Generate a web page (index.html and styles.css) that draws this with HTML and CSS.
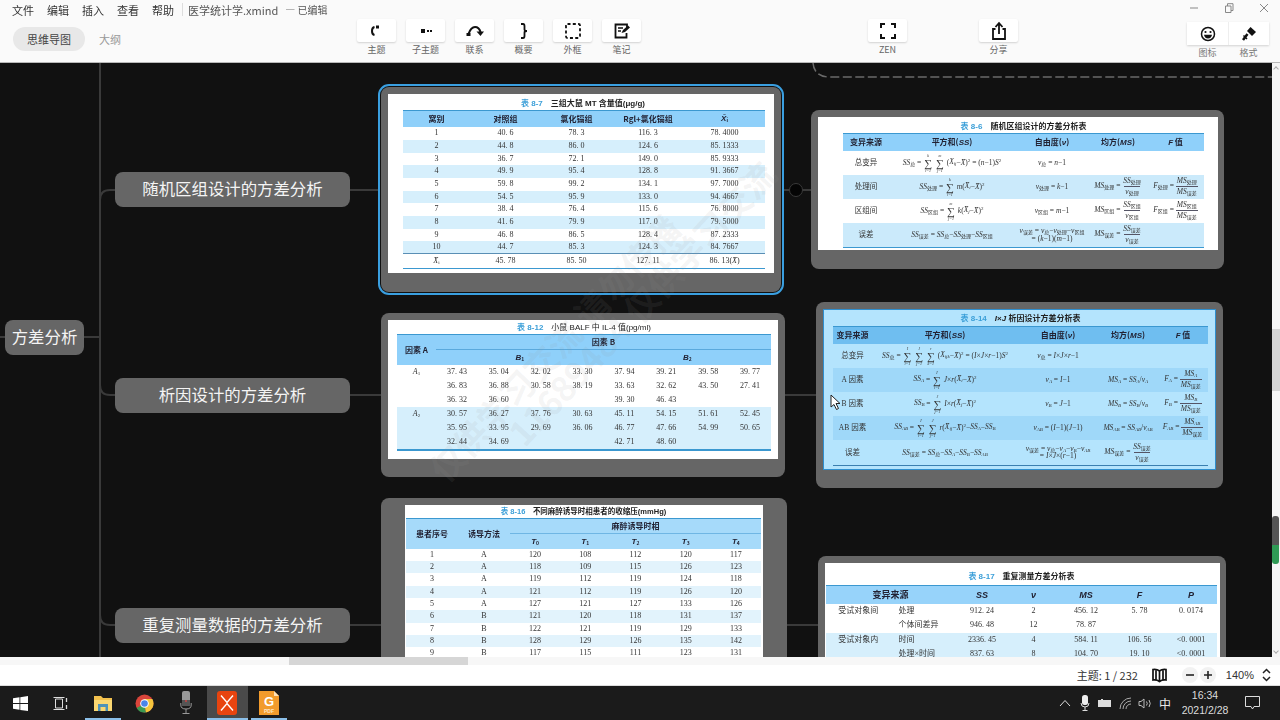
FILE: index.html
```html
<!DOCTYPE html>
<html lang="zh-CN">
<head>
<meta charset="utf-8">
<title>医学统计学.xmind</title>
<link rel="stylesheet" href="styles.css">
</head>
<body>
<header class="top">
  <div class="left">
    <nav class="menu"><span>文件</span><span>编辑</span><span>插入</span><span>查看</span><span>帮助</span><i class="vsep"></i><span class="doc">医学统计学.xmind</span><span class="doc2">— 已编辑</span></nav>
    <div class="tabs"><span class="pill">思维导图</span><span class="tab2">大纲</span></div>
  </div>
  <div class="tools">
    <div class="tool"><div class="btn"><svg width="16" height="16" viewBox="0 0 16 16"><path d="M5.500 4Q3 4.500 3 8T5.500 12" fill="none" stroke="#111" stroke-width="2"/><rect x="7" y="2.500" width="3" height="3" fill="#111"/></svg></div><label>主题</label></div>
    <div class="tool"><div class="btn"><svg width="16" height="16" viewBox="0 0 16 16"><rect x="3" y="6" width="4" height="4" fill="#111"/><rect x="9" y="7" width="2" height="2" fill="#111"/><rect x="12" y="7" width="2" height="2" fill="#111"/></svg></div><label>子主题</label></div>
    <div class="tool"><div class="btn"><svg width="20" height="16" viewBox="0 0 20 16"><path d="M3.500 11Q6 4 10 4T15.500 9" fill="none" stroke="#111" stroke-width="2.200"/><path d="M11.500 8.500H19L15.500 13Z" fill="#111"/><rect x="1.500" y="10" width="4" height="3" fill="#111"/></svg></div><label>联系</label></div>
    <div class="tool"><div class="btn"><svg width="16" height="18" viewBox="0 0 16 18"><path d="M5 2H7Q8.500 2 8.500 4V7.500Q8.500 9 11 9Q8.500 9 8.500 10.500V14Q8.500 16 7 16H5" fill="none" stroke="#111" stroke-width="1.800"/></svg></div><label>概要</label></div>
    <div class="tool"><div class="btn"><svg width="18" height="18" viewBox="0 0 18 18"><rect x="2" y="2" width="14" height="14" rx="1.500" fill="none" stroke="#111" stroke-width="1.800" stroke-dasharray="3 2.300"/></svg></div><label>外框</label></div>
    <div class="tool"><div class="btn"><svg width="18" height="18" viewBox="0 0 18 18"><path d="M14 6V2.500H2.500V15.500H13.500V11" fill="none" stroke="#111" stroke-width="1.800"/><path d="M5 6H10M5 9H8" stroke="#111" stroke-width="1.500"/><path d="M8.500 11L10 8L15 3.500L17 5.500L12 10Z" fill="#111"/></svg></div><label>笔记</label></div>
  </div>
  <div class="tool zen"><div class="btn wide"><svg width="18" height="18" viewBox="0 0 18 18"><path d="M2 6V2H6M12 2H16V6M16 12V16H12M6 16H2V12" fill="none" stroke="#111" stroke-width="2"/></svg></div><label>ZEN</label></div>
  <div class="tool share"><div class="btn wide"><svg width="18" height="20" viewBox="0 0 18 20"><path d="M5.500 8H3V18H15V8H12.500" fill="none" stroke="#111" stroke-width="1.800"/><path d="M9 13V3M5.500 6L9 2L12.500 6" fill="none" stroke="#111" stroke-width="1.800"/></svg></div><label>分享</label></div>
  <div class="right">
    <div class="win">
      <svg width="10" height="10" viewBox="0 0 10 10"><path d="M1 5H9" stroke="#888"/></svg>
      <svg width="10" height="10" viewBox="0 0 10 10"><path d="M1.500 3H7V9.500H1.500ZM3.500 3V.7H9V7.500H7" fill="none" stroke="#888"/></svg>
      <svg width="10" height="10" viewBox="0 0 10 10"><path d="M1 1L9 9M9 1L1 9" stroke="#888"/></svg>
    </div>
    <div class="rbtns">
      <div class="rb"><svg width="16" height="16" viewBox="0 0 16 16"><circle cx="8" cy="8" r="6.500" fill="none" stroke="#111" stroke-width="1.500"/><circle cx="5.500" cy="6" r="1.100" fill="#111"/><circle cx="10.500" cy="6" r="1.100" fill="#111"/><path d="M4 8.800H12Q11.500 12.500 8 12.500T4 8.800Z" fill="#111"/></svg></div>
      <div class="rb"><svg width="16" height="16" viewBox="0 0 16 16"><path d="M9.500 1L15 6L11 10L6 5Z" fill="#111"/><path d="M6.500 8L2 14" stroke="#111" stroke-width="2.500"/><path d="M2.500 9.500L6 13" stroke="#111" stroke-width="1.500"/></svg></div>
    </div>
    <div class="rlabels"><span>图标</span><span>格式</span></div>
  </div>
</header>

<main class="main">
  <section class="canvas">
    <svg class="links" width="1272" height="594" viewBox="0 63 1272 594">
      <g fill="none" stroke="#3a3a3a" stroke-width="2">
        <path d="M0 337H5M84 337H100M100 63V657"/>
        <path d="M100 200Q100 190 110 190H115M100 385Q100 395 110 395H115M100 615Q100 625 110 625H115"/>
        <path d="M350 190H378M350 395H381M350 625H381M784 190H811M785 395H816M787 625H818"/>
      </g>
      <path d="M813 63Q814 76 828 77H1272" fill="none" stroke="#6a6a6a" stroke-width="1.500" stroke-dasharray="9 3.500"/>
      <circle cx="796" cy="190" r="6.500" fill="#050505" stroke="#3a3a3a"/>
    </svg>

    <div class="node root">方差分析</div>
    <div class="node sub s1">随机区组设计的方差分析</div>
    <div class="node sub s2">析因设计的方差分析</div>
    <div class="node sub s3">重复测量数据的方差分析</div>

    <article class="card c1">
      <div class="img i1">
        <div class="ttl"><b>表 8-7</b>　<strong>三组大鼠 MT 含量值(μg/g)</strong></div>
        <table class="t t1">
          <thead><tr><th>窝别</th><th>对照组</th><th>氯化镉组</th><th>Rgl+氯化镉组</th><th><i>X̄</i><sub>i</sub></th></tr></thead>
          <tbody>
            <tr><td>1</td><td>40. 6</td><td>78. 3</td><td>116. 3</td><td>78. 4000</td></tr>
            <tr><td>2</td><td>44. 8</td><td>86. 0</td><td>124. 6</td><td>85. 1333</td></tr>
            <tr><td>3</td><td>36. 7</td><td>72. 1</td><td>149. 0</td><td>85. 9333</td></tr>
            <tr><td>4</td><td>49. 9</td><td>95. 4</td><td>128. 8</td><td>91. 3667</td></tr>
            <tr><td>5</td><td>59. 8</td><td>99. 2</td><td>134. 1</td><td>97. 7000</td></tr>
            <tr><td>6</td><td>54. 5</td><td>95. 9</td><td>133. 0</td><td>94. 4667</td></tr>
            <tr><td>7</td><td>38. 4</td><td>76. 4</td><td>115. 6</td><td>76. 8000</td></tr>
            <tr><td>8</td><td>41. 6</td><td>79. 9</td><td>117. 0</td><td>79. 5000</td></tr>
            <tr><td>9</td><td>46. 8</td><td>86. 5</td><td>128. 4</td><td>87. 2333</td></tr>
            <tr><td>10</td><td>44. 7</td><td>85. 3</td><td>124. 3</td><td>84. 7667</td></tr>
            <tr class="tot"><td><i>X̄</i><sub>i</sub></td><td>45. 78</td><td>85. 50</td><td>127. 11</td><td>86. 13(<i>X̄</i>)</td></tr>
          </tbody>
        </table>
      </div>
    </article>

    <article class="card c2">
      <div class="img i2">
        <div class="ttl"><b>表 8-6</b>　<strong>随机区组设计的方差分析表</strong></div>
        <table class="t t2">
          <thead><tr><th>变异来源</th><th>平方和(<i>SS</i>)</th><th>自由度(<i>ν</i>)</th><th>均方(<i>MS</i>)</th><th><i>F</i> 值</th></tr></thead>
          <tbody>
            <tr><td>总变异</td><td><i>SS</i><sub>总</sub> = <span class="sum"><small>k</small>∑<small>i=1</small></span> <span class="sum"><small>m</small>∑<small>j=1</small></span> (<i>X<sub>ij</sub></i>−<i>X̄</i>)<sup>2</sup> = (<i>n</i>−1)<i>S</i><sup>2</sup></td><td><i>ν</i><sub>总</sub> = <i>n</i>−1</td><td></td><td></td></tr>
            <tr><td>处理间</td><td><i>SS</i><sub>处理</sub> = <span class="sum"><small>k</small>∑<small>i=1</small></span> <i>m</i>(<i>X̄<sub>i</sub></i>−<i>X̄</i>)<sup>2</sup></td><td><i>ν</i><sub>处理</sub> = <i>k</i>−1</td><td><i>MS</i><sub>处理</sub> = <span class="frac"><span><i>SS</i><sub>处理</sub></span><span><i>ν</i><sub>处理</sub></span></span></td><td><i>F</i><sub>处理</sub> = <span class="frac"><span><i>MS</i><sub>处理</sub></span><span><i>MS</i><sub>误差</sub></span></span></td></tr>
            <tr><td>区组间</td><td><i>SS</i><sub>区组</sub> = <span class="sum"><small>m</small>∑<small>j=1</small></span> <i>k</i>(<i>X̄<sub>j</sub></i>−<i>X̄</i>)<sup>2</sup></td><td><i>ν</i><sub>区组</sub> = <i>m</i>−1</td><td><i>MS</i><sub>区组</sub> = <span class="frac"><span><i>SS</i><sub>区组</sub></span><span><i>ν</i><sub>区组</sub></span></span></td><td><i>F</i><sub>区组</sub> = <span class="frac"><span><i>MS</i><sub>区组</sub></span><span><i>MS</i><sub>误差</sub></span></span></td></tr>
            <tr><td>误差</td><td><i>SS</i><sub>误差</sub> = <i>SS</i><sub>总</sub>−<i>SS</i><sub>处理</sub>−<i>SS</i><sub>区组</sub></td><td><i>ν</i><sub>误差</sub> = <i>ν</i><sub>总</sub>−<i>ν</i><sub>处理</sub>−<i>ν</i><sub>区组</sub><br>= (<i>k</i>−1)(<i>m</i>−1)</td><td><i>MS</i><sub>误差</sub> = <span class="frac"><span><i>SS</i><sub>误差</sub></span><span><i>ν</i><sub>误差</sub></span></span></td><td></td></tr>
          </tbody>
        </table>
      </div>
    </article>

    <article class="card c3">
      <div class="img i3">
        <div class="ttl"><b>表 8-12</b>　<span>小鼠 BALF 中 IL-4 值(pg/ml)</span></div>
        <table class="t t3">
          <thead>
            <tr><th rowspan="2" class="fa">因素 A</th><th colspan="8" class="fb">因素 B</th></tr>
            <tr><th colspan="4"><i>B</i><sub>1</sub></th><th colspan="4"><i>B</i><sub>2</sub></th></tr>
          </thead>
          <tbody>
            <tr><td class="la"><i>A</i><sub>1</sub></td><td>37. 43</td><td>35. 04</td><td>32. 02</td><td>33. 30</td><td>37. 94</td><td>39. 21</td><td>39. 58</td><td>39. 77</td></tr>
            <tr><td></td><td>36. 83</td><td>36. 88</td><td>30. 58</td><td>38. 19</td><td>33. 63</td><td>32. 62</td><td>43. 50</td><td>27. 41</td></tr>
            <tr><td></td><td>36. 32</td><td>36. 60</td><td></td><td></td><td>39. 30</td><td>46. 43</td><td></td><td></td></tr>
            <tr class="st"><td class="la"><i>A</i><sub>2</sub></td><td>30. 57</td><td>36. 27</td><td>37. 76</td><td>30. 63</td><td>45. 11</td><td>54. 15</td><td>51. 61</td><td>52. 45</td></tr>
            <tr class="st"><td></td><td>35. 95</td><td>33. 95</td><td>29. 69</td><td>36. 06</td><td>46. 77</td><td>47. 66</td><td>54. 99</td><td>50. 65</td></tr>
            <tr class="st"><td></td><td>32. 44</td><td>34. 69</td><td></td><td></td><td>42. 71</td><td>48. 60</td><td></td><td></td></tr>
          </tbody>
        </table>
      </div>
    </article>

    <article class="card c4">
      <div class="img i4">
        <div class="ttl"><b>表 8-14</b>　<strong><i>I</i>×<i>J</i> 析因设计方差分析表</strong></div>
        <table class="t t4">
          <thead><tr><th>变异来源</th><th>平方和(<i>SS</i>)</th><th>自由度(<i>ν</i>)</th><th>均方(<i>MS</i>)</th><th><i>F</i> 值</th></tr></thead>
          <tbody>
            <tr><td>总变异</td><td><i>SS</i><sub>总</sub> = <span class="sum"><small>I</small>∑<small>i=1</small></span> <span class="sum"><small>J</small>∑<small>j=1</small></span> <span class="sum"><small>r</small>∑<small>k=1</small></span> (<i>X<sub>ijk</sub></i>−<i>X̄</i>)<sup>2</sup> = (<i>I</i>×<i>J</i>×<i>r</i>−1)<i>S</i><sup>2</sup></td><td><i>ν</i><sub>总</sub> = <i>I</i>×<i>J</i>×<i>r</i>−1</td><td></td><td></td></tr>
            <tr><td>A 因素</td><td><i>SS<sub>A</sub></i> = <span class="sum"><small>I</small>∑<small>i=1</small></span> <i>J</i>×<i>r</i>(<i>X̄<sub>i</sub></i>−<i>X̄</i>)<sup>2</sup></td><td><i>ν<sub>A</sub></i> = <i>I</i>−1</td><td><i>MS<sub>A</sub></i> = <i>SS<sub>A</sub></i>/<i>ν<sub>A</sub></i></td><td><i>F<sub>A</sub></i> = <span class="frac"><span><i>MS<sub>A</sub></i></span><span><i>MS</i><sub>误差</sub></span></span></td></tr>
            <tr><td>B 因素</td><td><i>SS<sub>B</sub></i> = <span class="sum"><small>J</small>∑<small>j=1</small></span> <i>I</i>×<i>r</i>(<i>X̄<sub>j</sub></i>−<i>X̄</i>)<sup>2</sup></td><td><i>ν<sub>B</sub></i> = <i>J</i>−1</td><td><i>MS<sub>B</sub></i> = <i>SS<sub>B</sub></i>/<i>ν<sub>B</sub></i></td><td><i>F<sub>B</sub></i> = <span class="frac"><span><i>MS<sub>B</sub></i></span><span><i>MS</i><sub>误差</sub></span></span></td></tr>
            <tr><td>AB 因素</td><td><i>SS<sub>AB</sub></i> = <span class="sum"><small>I</small>∑<small>i=1</small></span> <span class="sum"><small>J</small>∑<small>j=1</small></span> <i>r</i>(<i>X̄<sub>ij</sub></i>−<i>X̄</i>)<sup>2</sup>−<i>SS<sub>A</sub></i>−<i>SS<sub>B</sub></i></td><td><i>ν<sub>AB</sub></i> = (<i>I</i>−1)(<i>J</i>−1)</td><td><i>MS<sub>AB</sub></i> = <i>SS<sub>AB</sub></i>/<i>ν<sub>AB</sub></i></td><td><i>F<sub>AB</sub></i> = <span class="frac"><span><i>MS<sub>AB</sub></i></span><span><i>MS</i><sub>误差</sub></span></span></td></tr>
            <tr><td>误差</td><td><i>SS</i><sub>误差</sub> = <i>SS</i><sub>总</sub>−<i>SS<sub>A</sub></i>−<i>SS<sub>B</sub></i>−<i>SS<sub>AB</sub></i></td><td><i>ν</i><sub>误差</sub> = <i>ν</i><sub>总</sub>−<i>ν<sub>A</sub></i>−<i>ν<sub>B</sub></i>−<i>ν<sub>AB</sub></i><br>= <i>I</i>×<i>J</i>×(<i>r</i>−1)</td><td><i>MS</i><sub>误差</sub> = <span class="frac"><span><i>SS</i><sub>误差</sub></span><span><i>ν</i><sub>误差</sub></span></span></td><td></td></tr>
          </tbody>
        </table>
      </div>
    </article>

    <article class="card c5">
      <div class="img i5">
        <div class="ttl"><b>表 8-16</b>　<strong>不同麻醉诱导时相患者的收缩压(mmHg)</strong></div>
        <table class="t t5">
          <thead>
            <tr><th rowspan="2">患者序号</th><th rowspan="2">诱导方法</th><th colspan="5" class="fb">麻醉诱导时相</th></tr>
            <tr><th><i>T</i><sub>0</sub></th><th><i>T</i><sub>1</sub></th><th><i>T</i><sub>2</sub></th><th><i>T</i><sub>3</sub></th><th><i>T</i><sub>4</sub></th></tr>
          </thead>
          <tbody>
            <tr><td>1</td><td>A</td><td>120</td><td>108</td><td>112</td><td>120</td><td>117</td></tr>
            <tr><td>2</td><td>A</td><td>118</td><td>109</td><td>115</td><td>126</td><td>123</td></tr>
            <tr><td>3</td><td>A</td><td>119</td><td>112</td><td>119</td><td>124</td><td>118</td></tr>
            <tr><td>4</td><td>A</td><td>121</td><td>112</td><td>119</td><td>126</td><td>120</td></tr>
            <tr><td>5</td><td>A</td><td>127</td><td>121</td><td>127</td><td>133</td><td>126</td></tr>
            <tr><td>6</td><td>B</td><td>121</td><td>120</td><td>118</td><td>131</td><td>137</td></tr>
            <tr><td>7</td><td>B</td><td>122</td><td>121</td><td>119</td><td>129</td><td>133</td></tr>
            <tr><td>8</td><td>B</td><td>128</td><td>129</td><td>126</td><td>135</td><td>142</td></tr>
            <tr><td>9</td><td>B</td><td>117</td><td>115</td><td>111</td><td>123</td><td>131</td></tr>
          </tbody>
        </table>
      </div>
    </article>

    <article class="card c6">
      <div class="img i6">
        <div class="ttl"><b>表 8-17</b>　<strong>重复测量方差分析表</strong></div>
        <table class="t t6">
          <thead><tr><th colspan="2">变异来源</th><th><i>SS</i></th><th><i>ν</i></th><th><i>MS</i></th><th><i>F</i></th><th><i>P</i></th></tr></thead>
          <tbody>
            <tr><td>受试对象间</td><td class="lft">处理</td><td>912. 24</td><td>2</td><td>456. 12</td><td>5. 78</td><td>0. 0174</td></tr>
            <tr><td></td><td class="lft">个体间差异</td><td>946. 48</td><td>12</td><td>78. 87</td><td></td><td></td></tr>
            <tr class="st"><td>受试对象内</td><td class="lft">时间</td><td>2336. 45</td><td>4</td><td>584. 11</td><td>106. 56</td><td>&lt;0. 0001</td></tr>
            <tr class="st"><td></td><td class="lft">处理×时间</td><td>837. 63</td><td>8</td><td>104. 70</td><td>19. 10</td><td>&lt;0. 0001</td></tr>
          </tbody>
        </table>
      </div>
    </article>

    <div class="mark m1">11689484 仅供学习交流</div>
    <div class="mark m2">仅供学习交流 请勿传播</div>
    <svg class="cursor" width="13" height="17" viewBox="0 0 13 17"><path d="M1 1V13L4 10.500L6.500 15.500L8.500 14.500L6 9.500H10Z" fill="#fff" stroke="#222" stroke-width="1"/></svg>
  </section>
  <aside class="vbar">
    <span class="arr up"></span>
    <div class="vthumb"></div>
    <div class="vind"></div>
    <span class="arr dn"></span>
  </aside>
</main>

<div class="hbar"><div class="hthumb"></div></div>

<footer class="status">
  <span class="count">主题: 1 / 232</span>
  <svg class="book" width="17" height="15" viewBox="0 0 17 15"><path d="M8.500 3Q6 1 2 1.500V12Q6 11.500 8.500 13.500Q11 11.500 15 12V1.500Q11 1 8.500 3ZM8.500 3V13.500M5 1.500V11.500M12 1.500V11.500" fill="none" stroke="#111" stroke-width="1.700"/></svg>
  <span class="zbtn"><svg width="10" height="10" viewBox="0 0 10 10"><path d="M1 5H9" stroke="#222" stroke-width="1.600"/></svg></span>
  <span class="zbtn"><svg width="10" height="10" viewBox="0 0 10 10"><path d="M1 5H9M5 1V9" stroke="#222" stroke-width="1.600"/></svg></span>
  <span class="zoom">140%</span>
  <svg class="chev" width="9" height="14" viewBox="0 0 9 14"><path d="M1 5L4.500 1.500L8 5M1 9L4.500 12.500L8 9" fill="none" stroke="#222" stroke-width="1.500"/></svg>
</footer>

<footer class="taskbar">
  <div class="tb w40"><svg width="15" height="15" viewBox="0 0 15 15"><path d="M0 2.200L6.500 1.300V7H0ZM7.300 1.200L15 0V7H7.300ZM0 7.900H6.500V13.700L0 12.800ZM7.300 7.900H15V15L7.300 13.900Z" fill="#fff"/></svg></div>
  <div class="tb w40"><svg width="15" height="15" viewBox="0 0 15 15"><path d="M2.500 3H9.500V12H2.500ZM.5 1.500H11.500M.5 13.500H11.500" fill="none" stroke="#ddd"/><path d="M13.500 2V6M13.500 9V13" stroke="#ddd" stroke-width="1.300"/></svg></div>
  <div class="tb f run"><svg width="20" height="18" viewBox="0 0 20 18"><path d="M1 2H8L10 4H19V17H1Z" fill="#f2c14e"/><rect x="1" y="6" width="18" height="11" fill="#fbd872"/><rect x="5" y="10" width="10" height="7" fill="#4f93b8"/><rect x="7.500" y="13" width="5" height="4" fill="#fbd872"/></svg></div>
  <div class="tb"><svg width="19" height="19" viewBox="0 0 19 19"><circle cx="9.500" cy="9.500" r="9" fill="#d9453b"/><path d="M9.500 9.500L1.700 14A9 9 0 0 0 11 18.400Z" fill="#3a9a52"/><path d="M9.500 9.500L11 18.400A9 9 0 0 0 17.300 5H9.500Z" fill="#f5c53d"/><circle cx="9.500" cy="9.500" r="4.300" fill="#fff"/><circle cx="9.500" cy="9.500" r="3.300" fill="#4a85e8"/></svg></div>
  <div class="tb"><svg width="12" height="24" viewBox="0 0 12 24"><rect x="2" y="0" width="8" height="15" rx="2" fill="#999"/><rect x="2" y="9" width="8" height="6" fill="#555"/><circle cx="6" cy="10" r="1" fill="#c44"/><path d="M.8 12V14Q.8 18 6 18T11.200 14V12M6 18V22M2.500 22.500H9.500" fill="none" stroke="#999"/></svg></div>
  <div class="tb act"><span class="xm"><svg width="20" height="20" viewBox="0 0 20 20"><path d="M4 2.500L10 9.500L16 2.500M4 17.500L10 10.500L16 17.500" fill="none" stroke="#fff" stroke-width="1.400"/></svg></span></div>
  <div class="tb run"><svg width="20" height="24" viewBox="0 0 20 24"><path d="M0 0H15L20 5V24H0Z" fill="#f29b2c"/><path d="M15 0L20 5H15Z" fill="#fde3ba"/><text x="10" y="15" class="gp">G</text><text x="10" y="22" class="gp2">PDF</text></svg></div>
  <div class="tray">
    <span class="ti"><svg width="12" height="8" viewBox="0 0 12 8"><path d="M1 7L6 1.500L11 7" fill="none" stroke="#ddd"/></svg></span>
    <span class="ti"><svg width="10" height="16" viewBox="0 0 10 16"><rect x="2" y="0" width="6" height="10" rx="2.500" fill="#eee"/><path d="M1 8Q1 12 5 12T9 8M5 12V15M2.500 15.500H7.500" fill="none" stroke="#ddd"/></svg></span>
    <span class="ti"><svg width="14" height="9" viewBox="0 0 14 9"><rect x="0" y="1" width="13" height="7" fill="#ddd"/><rect x="3" y="0" width="2" height="2" fill="#ddd"/></svg></span>
    <span class="ti"><svg width="13" height="13" viewBox="0 0 13 13"><path d="M1 12A11 11 0 0 1 12 1M4 12A8 8 0 0 1 12 4M7 12A5 5 0 0 1 12 7" fill="none" stroke="#aaa"/></svg></span>
    <span class="ti"><svg width="15" height="11" viewBox="0 0 15 11"><path d="M1 3.500H3L6 1V10L3 7.500H1ZM8.500 3.500Q10 5.500 8.500 7.500M11 2Q13.500 5.500 11 9" fill="none" stroke="#bbb"/></svg></span>
    <span class="ti ime">中</span>
    <span class="clock"><span>16:34</span><span>2021/2/28</span></span>
    <span class="note"><svg width="15" height="14" viewBox="0 0 15 14"><path d="M.5 .5H14.500V10.500H9L7.500 13L6 10.500H.5Z" fill="none" stroke="#ddd"/></svg></span>
  </div>
</footer>
</body>
</html>
```
FILE: styles.css
```css
* { box-sizing: border-box; }
html, body { margin: 0; padding: 0; }
body {
  width: 1280px; height: 720px; overflow: hidden;
  display: flex; flex-direction: column;
  font-family: "Noto Sans CJK SC", "Liberation Sans", sans-serif;
  background: #fff; color: #333;
}

/* top bar */
.top { height: 63px; flex: none; display: flex; background: #fafafa; border-bottom: 1px solid #b9b9b9; }
.left { width: 357px; flex: none; display: flex; flex-direction: column; }
.menu { height: 19px; padding-left: 12px; display: flex; align-items: center; gap: 13px; font-size: 11px; color: #333; filter: blur(.25px); }
.vsep { width: 1px; height: 13px; background: #ddd; margin: 0 -8px 0 -5px; }
.doc { font-size: 11px; color: #555; margin-right: -6px; }
.doc2 { font-size: 10px; color: #555; }
.tabs { margin: 8px 0 0 13px; display: flex; align-items: center; font-size: 11px; }
.pill { width: 72px; height: 24px; line-height: 24px; text-align: center; border-radius: 12px; background: #e8e8e8; color: #444; }
.tab2 { margin-left: 14px; color: #999; }
.tools { display: flex; gap: 10px; }
.tool { width: 39px; margin-top: 19px; display: flex; flex-direction: column; align-items: center; }
.btn { width: 39px; height: 23px; display: flex; align-items: center; justify-content: center; background: #fff; border-radius: 2px; box-shadow: 0 1px 2px rgba(0,0,0,.16); }
.tool label { margin-top: 1px; font-size: 9px; line-height: 14px; color: #666; white-space: nowrap; }
.zen { margin-left: 227px; }
.share { margin-left: 72px; }
.right { width: 82px; margin-left: 169px; display: flex; flex-direction: column; }
.win { height: 20px; display: flex; justify-content: space-between; align-items: center; padding: 0 0 4px 2px; margin-right: 0; }
.win svg:last-child { margin-right: 0; }
.rbtns { height: 23px; margin-top: 2px; display: flex; background: #fff; box-shadow: 0 1px 2px rgba(0,0,0,.16); }
.rb { width: 41px; display: flex; align-items: center; justify-content: center; }
.rb + .rb { border-left: 1px solid #eee; }
.rlabels { display: flex; margin-top: 1px; font-size: 9px; line-height: 14px; color: #777; }
.rlabels span { width: 41px; text-align: center; }

/* main */
.main { height: 594px; flex: none; display: flex; }
.canvas { position: relative; width: 1272px; height: 594px; overflow: hidden; background: #111; }
.links { position: absolute; left: 0; top: 0; }
.node { position: absolute; display: flex; align-items: center; justify-content: center; padding-bottom: 3px; background: #666; color: #f4f4f4; border-radius: 8px; font-size: 16.400px; white-space: nowrap; }
.root { left: 5px; top: 257px; width: 79px; height: 35px; }
.sub { left: 115px; width: 235px; height: 35px; }
.s1 { top: 109px; } .s2 { top: 315px; } .s3 { top: 545px; }

.card { position: absolute; background: #666; border-radius: 8px; padding: 7px; }
.c1 { left: 381px; top: 24px; width: 400px; height: 205px; outline: 2px solid #3a9fe0; outline-offset: 1px; }
.c2 { left: 811px; top: 47px; width: 413px; height: 159px; padding-bottom: 19px; }
.c3 { left: 381px; top: 250px; width: 404px; height: 164px; }
.c4 { left: 816px; top: 239px; width: 407px; height: 186px; }
.c5 { left: 381px; top: 435px; width: 406px; height: 260px; padding-left: 24px; padding-right: 24px; }
.c6 { left: 818px; top: 493px; width: 408px; height: 200px; }
.img { background: #fff; filter: blur(.4px); }
.i1 { width: 386px; height: 179px; padding-left: 15px; }
.i2 { width: 400px; height: 133px; padding-left: 25px; }
.i3 { width: 390px; height: 139px; padding-left: 9px; }
.i4 { width: 393px; height: 161px; padding-left: 10px; background: #b4e4fd; outline: 1px solid #2f8fcf; outline-offset: -1px; }
.i5 { width: 358px; height: 240px; padding-left: 1px; }
.i6 { width: 395px; height: 190px; padding-left: 1px; }
.ttl { text-align: center; font-size: 7.500px; line-height: 16px; height: 16px; padding-top: 2px; color: #222; white-space: nowrap; font-family: "Liberation Sans", "Noto Sans CJK SC", sans-serif; }
.ttl b { color: #3b9fd8; font-weight: 700; }
.ttl strong { font-weight: 700; }
.i1 .ttl { width: 360px; font-size: 8px; }
.i2 .ttl { width: 361px; height: 16px; font-size: 8px; }
.i3 .ttl { width: 374px; height: 14px; line-height: 12px; font-size: 8px; }
.i4 .ttl { width: 375px; height: 17px; line-height: 16px; font-size: 8px; }
.i5 .ttl { width: 355px; height: 13px; line-height: 10px; }
.i6 .ttl { width: 391px; height: 22px; line-height: 24px; font-size: 8px; }

/* tables */
.t { border-collapse: collapse; table-layout: fixed; font-family: "Liberation Serif", "Noto Sans CJK SC", serif; font-size: 8px; color: #333; text-align: center; line-height: 1; }
.t td, .t th { padding: 0; white-space: nowrap; overflow: visible; }
.t th { font-family: "Noto Sans CJK SC", "Liberation Sans", sans-serif; font-size: 8px; font-weight: 700; background: #8fd0fa; color: #223; }
.t thead tr:first-child th { border-top: 1px solid #3b98d0; }
.t sub { font-size: 5px; line-height: 0; vertical-align: -1px; }
.t sup { font-size: 5px; line-height: 0; vertical-align: 3px; }
.t th i { font-family: "Liberation Sans", sans-serif; }
.sum { display: inline-flex; flex-direction: column; align-items: center; vertical-align: middle; font-size: 11px; line-height: 10px; margin: 0 1px; }
.sum small { font-size: 4px; line-height: 5px; font-style: italic; }
.frac { display: inline-flex; flex-direction: column; align-items: center; vertical-align: middle; }
.frac span { padding: 1px 1px 2px; line-height: 7px; }
.frac span + span { border-top: 1px solid #556; }
.st td { background: #d6effc; }

.t1 { width: 362px; }
.t1 th:nth-child(1) { width: 67px; }
.t1 th:nth-child(2) { width: 71px; }
.t1 th:nth-child(3) { width: 71px; }
.t1 th:nth-child(4) { width: 72px; }
.t1 th:nth-child(5) { width: 81px; }
.t1 thead tr { height: 16px; }
.t1 tbody tr { height: 13px; }
.t1 tbody tr:nth-child(3n) { height: 12px; }
.t1 tbody tr:nth-child(even) td { background: #d6effc; }
.t1 .tot { height: 15px; }
.t1 .tot td { background: #fff; border-top: 1px solid #5a8fb5; border-bottom: 1px solid #3b98d0; }

.t2 { width: 361px; }
.t2 th:nth-child(1) { width: 46px; }
.t2 th:nth-child(2) { width: 126px; }
.t2 th:nth-child(3) { width: 74px; }
.t2 th:nth-child(4) { width: 58px; }
.t2 th:nth-child(5) { width: 57px; }
.t2 thead tr { height: 17px; }
.t2 tbody tr { height: 24px; }
.t2 tbody td { font-size: 7.500px; }
.t2 tbody tr:nth-child(even) td { background: #cbeafb; }
.t2 tbody tr:last-child td { border-bottom: 1px solid #3b98d0; height: 25px; }

.t3 { width: 374px; }
.t3 th:nth-child(1).fa { width: 39px; }
.t3 td { width: 41px; }
.t3 tbody td:last-child { width: 47px; }
.t3 tbody td:first-child { width: 39px; }
.t3 thead tr { height: 15px; }
.t3 tbody tr { height: 14px; }
.t3 tbody tr:last-child td { border-bottom: 2px solid #3b98d0; height: 15px; }
.t3 .fb { border-bottom: 1px solid #5aa9dd; }
.t3 .la { padding-left: 0; text-align: center; }

.t4 { width: 375px; font-size: 7.500px; }
.t4 th { background: #6fbef0; }
.t4 th:nth-child(1) { width: 39px; }
.t4 th:nth-child(2) { width: 146px; }
.t4 th:nth-child(3) { width: 80px; }
.t4 th:nth-child(4) { width: 60px; }
.t4 th:nth-child(5) { width: 50px; }
.t4 thead tr { height: 17px; }
.t4 tbody tr { height: 24px; }
.t4 tbody tr:nth-child(even) td { background: #9fd8f9; }
.t4 tbody tr:last-child { height: 26px; }
.t4 tbody tr:last-child td { border-bottom: 1px solid #3b7fb0; }

.t5 { width: 355px; }
.t5 th { background: #a6dafa; }
.t5 th[rowspan] { width: 52px; }
.t5 tbody td:nth-child(n+3) { width: 49px; }
.t5 thead tr { height: 15px; }
.t5 tbody tr { height: 12px; }
.t5 tbody tr:nth-child(3n) { height: 13px; }
.t5 tbody tr:nth-child(even) td { background: #e2f3fc; }
.t5 .fb { border-bottom: 1px solid #6fb6e4; }

.t6 { width: 391px; }
.t6 th:nth-child(1) { width: 129px; }
.t6 th:nth-child(2) { width: 54px; }
.t6 th:nth-child(3) { width: 49px; }
.t6 th:nth-child(4) { width: 56px; }
.t6 th:nth-child(5) { width: 51px; }
.t6 th:nth-child(6) { width: 52px; }
.t6 th { background: #97d3fa; font-size: 9px; }
.t6 thead tr { height: 18px; }
.t6 tbody tr { height: 14.500px; }
.t6 td:first-child { width: 69px; }
.t6 td.lft { width: 60px; text-align: left; padding-left: 8px; }
.t6 tbody td { font-size: 8px; }

.mark { position: absolute; color: rgba(150,150,150,.11); font-size: 34px; font-weight: 700; white-space: nowrap; transform: rotate(-47deg); pointer-events: none; }
.m1 { left: 455px; top: 215px; }
.m2 { left: 380px; top: 260px; }
.cursor { position: absolute; left: 830px; top: 331px; }

/* scrollbars */
.vbar { position: relative; width: 8px; background: #f5f5f5; }
.vthumb { width: 8px; height: 62px; margin-top: 266px; background: #d4d4d4; }
.vind { position: absolute; left: 0; top: 453px; width: 7px; height: 48px; border-radius: 3px; background: linear-gradient(#555 60%, #2f9a55 60%); }
.arr { position: absolute; left: 2px; width: 4px; height: 4px; border-left: 1px solid #aaa; border-top: 1px solid #aaa; }
.up { top: 4px; transform: rotate(45deg); }
.dn { bottom: 4px; transform: rotate(225deg); }
.hbar { height: 8px; flex: none; background: #f7f7f7; padding-left: 289px; }
.hthumb { width: 179px; height: 8px; background: #d6d6d6; }

/* status */
.status { height: 21px; flex: none; display: flex; align-items: center; justify-content: flex-end; padding-right: 9px; background: #fff; border-bottom: 1px solid #ddd; font-size: 11px; color: #333; }
.count { margin-right: 13px; }
.book { margin-right: 14px; }
.zbtn { width: 16px; height: 16px; border-radius: 8px; background: #f2f2f2; display: flex; align-items: center; justify-content: center; margin-right: 2px; }
.zoom { margin: 0 8px 0 8px; font-family: "Liberation Sans", sans-serif; }

/* taskbar */
.taskbar { height: 34px; flex: 1; display: flex; background: #1b1b1b; }
.tb { position: relative; width: 41.500px; flex: none; display: flex; align-items: center; justify-content: center; }
.w40 { width: 40px; }
.f { margin-left: 2px; }
.run::after, .act::after { content: ""; position: absolute; left: 3px; right: 3px; bottom: 0; height: 2px; background: #8bbfe8; }
.act { background: #4a4a4a; }
.act::after { left: 0; right: 0; }
.xm { width: 20px; height: 24px; display: flex; align-items: center; justify-content: center; background: #e8440f; border-radius: 3px; }
.gp { fill: #fff; font: 700 13px "Liberation Sans", sans-serif; text-anchor: middle; }
.gp2 { fill: #ffe7c4; font: 700 5px "Liberation Sans", sans-serif; text-anchor: middle; }
.tray { margin-left: auto; display: flex; align-items: center; padding-right: 10px; color: #e8e8e8; }
.ti { width: 20px; display: flex; align-items: center; justify-content: center; }
.ime { font-size: 12px; }
.clock { width: 60px; display: flex; flex-direction: column; align-items: center; font: 10.500px/15px "Liberation Sans", sans-serif; color: #ddd; }
.note { width: 35px; display: flex; justify-content: center; }
```
